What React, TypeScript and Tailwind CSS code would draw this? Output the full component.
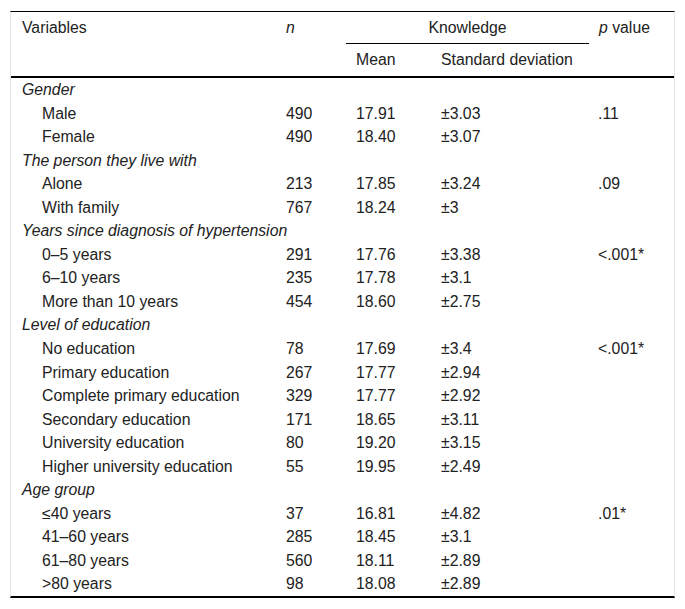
import React from "react";

type Row =
  | { kind: "group"; label: string }
  | { kind: "item"; label: string; n: string; mean: string; sd: string; p?: string };

const rows: Row[] = [
  { kind: "group", label: "Gender" },
  { kind: "item", label: "Male", n: "490", mean: "17.91", sd: "±3.03", p: ".11" },
  { kind: "item", label: "Female", n: "490", mean: "18.40", sd: "±3.07" },
  { kind: "group", label: "The person they live with" },
  { kind: "item", label: "Alone", n: "213", mean: "17.85", sd: "±3.24", p: ".09" },
  { kind: "item", label: "With family", n: "767", mean: "18.24", sd: "±3" },
  { kind: "group", label: "Years since diagnosis of hypertension" },
  { kind: "item", label: "0–5 years", n: "291", mean: "17.76", sd: "±3.38", p: "<.001*" },
  { kind: "item", label: "6–10 years", n: "235", mean: "17.78", sd: "±3.1" },
  { kind: "item", label: "More than 10 years", n: "454", mean: "18.60", sd: "±2.75" },
  { kind: "group", label: "Level of education" },
  { kind: "item", label: "No education", n: "78", mean: "17.69", sd: "±3.4", p: "<.001*" },
  { kind: "item", label: "Primary education", n: "267", mean: "17.77", sd: "±2.94" },
  { kind: "item", label: "Complete primary education", n: "329", mean: "17.77", sd: "±2.92" },
  { kind: "item", label: "Secondary education", n: "171", mean: "18.65", sd: "±3.11" },
  { kind: "item", label: "University education", n: "80", mean: "19.20", sd: "±3.15" },
  { kind: "item", label: "Higher university education", n: "55", mean: "19.95", sd: "±2.49" },
  { kind: "group", label: "Age group" },
  { kind: "item", label: "≤40 years", n: "37", mean: "16.81", sd: "±4.82", p: ".01*" },
  { kind: "item", label: "41–60 years", n: "285", mean: "18.45", sd: "±3.1" },
  { kind: "item", label: "61–80 years", n: "560", mean: "18.11", sd: "±2.89" },
  { kind: "item", label: ">80 years", n: "98", mean: "18.08", sd: "±2.89" },
];

const cols = "grid grid-cols-[265px_70px_84px_159px_85px]";

export default function App() {
  return (
    <div
      className="bg-white w-[685px] h-[609px] pt-[11px] pl-[10px] text-[#222] text-[15.8px]"
      style={{ fontFamily: '"Liberation Sans", Arial, sans-serif' }}
    >
      <div className="w-[665px] border-t border-x border-b-2 border-t-black border-x-[#e4e4e4] border-b-black">
        {/* Header */}
        <div className={`${cols} border-b-2 border-black`}>
          <div className="row-span-2 h-[64px] pl-[11px]">
            <div className="h-[32px] flex items-center">Variables</div>
          </div>
          <div className="row-span-2 pl-[10px]">
            <div className="h-[32px] flex items-center italic">n</div>
          </div>
          <div className="col-span-2 h-[32px] border-b border-black flex items-center justify-center">
            Knowledge
          </div>
          <div className="row-span-2 pl-[10px]">
            <div className="h-[32px] flex items-center">
              <span className="italic">p</span>
              <span>&nbsp;value</span>
            </div>
          </div>
          <div className="h-[32px] flex items-center pl-[10px]">Mean</div>
          <div className="h-[32px] flex items-center pl-[11px]">Standard deviation</div>
        </div>
        {/* Body */}
        <div className="flex flex-col">
          {rows.map((r, i) =>
            r.kind === "group" ? (
              <div key={i} className={`${cols} h-[23.55px] items-center`}>
                <div className="col-span-5 pl-[11px] italic whitespace-nowrap">{r.label}</div>
              </div>
            ) : (
              <div key={i} className={`${cols} h-[23.55px] items-center`}>
                <div className="pl-[31px] whitespace-nowrap">{r.label}</div>
                <div className="pl-[10px]">{r.n}</div>
                <div className="pl-[10px]">{r.mean}</div>
                <div className="pl-[11px]">{r.sd}</div>
                <div className="pl-[9px]">{r.p ?? ""}</div>
              </div>
            )
          )}
        </div>
      </div>
    </div>
  );
}
